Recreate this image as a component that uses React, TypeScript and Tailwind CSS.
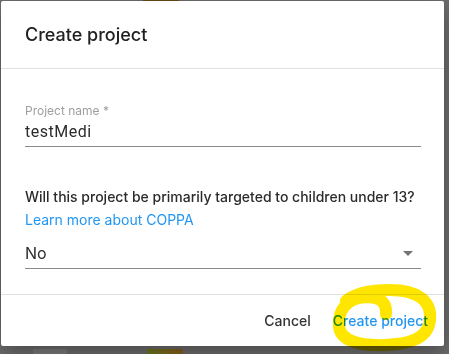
import React from 'react';

export default function App() {
  return (
    <div
      className="relative w-[449px] h-[354px] overflow-hidden bg-[#6e6e6e]"
      style={{ fontFamily: 'Inter, "Noto Sans", sans-serif' }}
    >
      {/* bits of the page behind the backdrop */}
      <div className="absolute left-[33px] bottom-0 w-[34px] h-[5px] bg-[#7c7c7c]" />
      <div className="absolute left-[147px] bottom-0 w-[36px] h-[5px] bg-gradient-to-r from-[#6d7a1c] to-[#8a5f1a]" />
      <div className="absolute left-[143px] top-0 w-[36px] h-[2px] bg-[#6a4a16]" />

      <div className="relative ml-[1px] mt-[1px] w-[443px] h-[345px] flex flex-col bg-white rounded-[2px] shadow-[0_8px_24px_rgba(0,0,0,0.35)]">
        <div className="h-[68px] px-6 flex items-center border-b border-[#e0e0e0]">
          <h2 className="text-[18px] font-medium text-[#212121]">Create project</h2>
        </div>

        <div className="flex-1 px-6 pt-[34px]">
          <div className="w-[396px]">
            <div className="text-[12px] leading-4 text-[#9e9e9e]">Project name *</div>
            <div
              className="pt-[3px] pb-[4px] text-[16px] leading-[20px] tracking-[0.5px] text-[#2b2b2b] border-b border-[#8a8a8a]"
              style={{ fontFamily: 'Roboto, sans-serif' }}
            >
              testMedi
            </div>

            <p className="mt-[40px] text-[14px] leading-[20px] font-medium text-[#2b2b2b]">
              Will this project be primarily targeted to children under 13?
            </p>
            <a className="block mt-[3px] text-[14px] leading-[20px] text-[#2196f3]">
              Learn more about COPPA
            </a>

            <div className="mt-[13px] pb-[5px] flex items-center justify-between border-b border-[#8a8a8a]">
              <span className="text-[16px] leading-[20px] text-[#2b2b2b]">No</span>
              <svg width="10" height="5" viewBox="0 0 10 5" className="mr-[8px]">
                <path d="M0 0h10L5 5z" fill="#757575" />
              </svg>
            </div>
          </div>
        </div>

        <div className="h-[52px] flex items-center justify-end gap-[22px] pr-[16px] border-t border-[#e0e0e0]">
          <button className="text-[14px] font-medium text-[#333333]">Cancel</button>
          <button className="text-[14px] font-medium text-[#2196f3]">Create project</button>
        </div>
      </div>

      {/* highlighter scribble */}
      <svg
        className="absolute left-0 top-0 mix-blend-multiply pointer-events-none"
        width="449"
        height="354"
        viewBox="0 0 449 354"
      >
        <path
          d="M386 314 C387 302 380 297 366 297 C346 298 338 311 339 326 C340 341 360 346 385 345 C411 344 428 338 430 320 C432 299 415 290 390 290 C370 290 354 294 346 301"
          fill="none"
          stroke="#ffe600"
          strokeWidth="12"
          strokeLinecap="round"
          strokeLinejoin="round"
        />
      </svg>
    </div>
  );
}
